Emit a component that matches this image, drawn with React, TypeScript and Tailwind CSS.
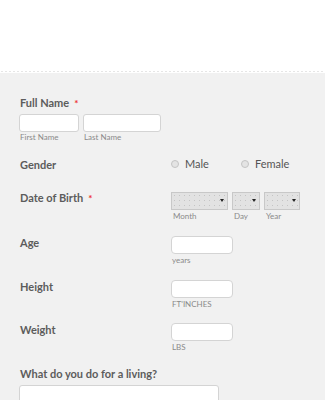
import React from 'react';

const font = { fontFamily: 'Lato, "Open Sans", sans-serif' };

function Label({ text, required = false }: { text: string; required?: boolean }) {
  return (
    <div className="flex items-center text-[11px] leading-[14px] font-bold text-[#5c5c5c]">
      <span>{text}</span>
      {required && <span className="ml-[5px] text-[#e33] text-[10px]">*</span>}
    </div>
  );
}

function Input({ className = '' }: { className?: string }) {
  return <div className={`h-[18px] bg-white border border-[#d4d4d4] rounded-[3px] ${className}`} />;
}

function Sub({ text, className = '' }: { text: string; className?: string }) {
  return <div className={`text-[8px] leading-[10px] text-[#8a8a8a] ${className}`}>{text}</div>;
}

function Select({ width }: { width: string }) {
  return (
    <div
      className={`${width} h-[18px] relative border border-[#c8c8c8] bg-[#e2e2e2] bg-[radial-gradient(circle,#c4c4c4_0.6px,transparent_0.8px)] bg-[length:5px_5px]`}
    >
      <span className="absolute right-[3px] top-[6px] w-0 h-0 border-l-[2px] border-r-[2px] border-t-[3px] border-l-transparent border-r-transparent border-t-[#222]" />
    </div>
  );
}

function Radio({ text }: { text: string }) {
  return (
    <div className="flex items-center">
      <span className="w-[8px] h-[8px] rounded-full border border-[#c4c4c4] bg-[#e4e4e4]" />
      <span className="ml-[6px] text-[11px] leading-[14px] text-[#555]">{text}</span>
    </div>
  );
}

function UnitRow({ label, unit, mt }: { label: string; unit: string; mt: string }) {
  return (
    <div className={`flex ${mt}`}>
      <div className="w-[151px]">
        <Label text={label} />
      </div>
      <div>
        <Input className="w-[62px] rounded-[4px]" />
        <Sub text={unit} className="mt-[1px] ml-[1px]" />
      </div>
    </div>
  );
}

export default function App() {
  return (
    <div className="w-[325px] h-[400px] overflow-hidden bg-white" style={font}>
      <div className="h-[70px] bg-white" />
      <div className="h-[3px] bg-[radial-gradient(circle,#e6e6e6_0.8px,transparent_1px)] bg-[length:4px_3px]" />
      <div className="bg-[#f1f1f1] h-[327px] px-[20px] pt-[23px]">
        <Label text="Full Name" required />
        <div className="flex gap-[4px] mt-[4px] ml-[-1px]">
          <div>
            <Input className="w-[60px]" />
            <Sub text="First Name" className="mt-0 ml-[1px]" />
          </div>
          <div>
            <Input className="w-[78px]" />
            <Sub text="Last Name" className="mt-0 ml-[1px]" />
          </div>
        </div>

        <div className="flex items-center mt-[14px]">
          <div className="w-[151px] pt-[2px]">
            <Label text="Gender" />
          </div>
          <div className="flex gap-[32px]">
            <Radio text="Male" />
            <Radio text="Female" />
          </div>
        </div>

        <div className="flex mt-[19px]">
          <div className="w-[151px]">
            <Label text="Date of Birth" required />
          </div>
          <div className="flex gap-[4px] mt-[1px]">
            <div>
              <Select width="w-[57px]" />
              <Sub text="Month" className="mt-[1px] ml-[2px]" />
            </div>
            <div>
              <Select width="w-[28px]" />
              <Sub text="Day" className="mt-[1px] ml-[2px]" />
            </div>
            <div>
              <Select width="w-[36px]" />
              <Sub text="Year" className="mt-[1px] ml-[2px]" />
            </div>
          </div>
        </div>

        <UnitRow label="Age" unit="years" mt="mt-[15px]" />
        <UnitRow label="Height" unit="FT'INCHES" mt="mt-[15px]" />
        <UnitRow label="Weight" unit="LBS" mt="mt-[14px]" />

        <div className="mt-[15px]">
          <Label text="What do you do for a living?" />
        </div>
        <div className="mt-[4px] ml-[-1px] w-[200px] h-[40px] bg-white border border-[#d4d4d4] rounded-[3px]" />
      </div>
    </div>
  );
}
